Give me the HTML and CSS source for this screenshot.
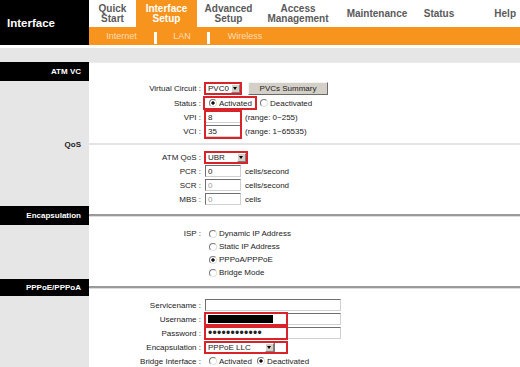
FILE: index.html
```html
<!DOCTYPE html>
<html lang="en">
<head>
    <meta charset="UTF-8">
    <meta name="viewport" content="width=device-width, initial-scale=1.0">
    <title>Interface Setup - Internet</title>
    <link rel="stylesheet" href="styles.css">
</head>
<body>
    <header class="top">
        <div class="brand">Interface</div>
        <div class="menu">
            <nav class="tabs">
                <a class="tab tab-quick">Quick<br>Start</a>
                <a class="tab tab-iface active">Interface<br>Setup</a>
                <a class="tab tab-adv">Advanced<br>Setup</a>
                <a class="tab tab-access">Access<br>Management</a>
                <a class="tab tab-maint">Maintenance</a>
                <a class="tab tab-status">Status</a>
                <a class="tab tab-help">Help</a>
            </nav>
            <nav class="subnav">
                <a class="sub sub-internet">Internet</a>
                <span class="sep"></span>
                <a class="sub sub-lan">LAN</a>
                <span class="sep"></span>
                <a class="sub sub-wireless">Wireless</a>
            </nav>
        </div>
    </header>

    <div class="strip"></div>

    <main class="form">
        <!-- ATM VC -->
        <div class="sec-head">
            <div class="sec-title">ATM VC</div>
            <div class="sec-rule thin"></div>
        </div>
        <div class="row row-tall">
            <span class="label">Virtual Circuit :</span>
            <span class="field">
                <span class="select sel-pvc hl"><span class="val">PVC0</span><span class="arrow"></span></span>
                <span class="btn">PVCs Summary</span>
            </span>
        </div>
        <div class="row">
            <span class="label">Status :</span>
            <span class="field">
                <span class="opt opt-status hl"><span class="radio on"></span>Activated</span>
                <span class="opt"><span class="radio"></span>Deactivated</span>
            </span>
        </div>
        <div class="row">
            <span class="label">VPI :</span>
            <span class="field">
                <span class="input hl hl-pair">8</span>
                <span class="note">(range: 0~255)</span>
            </span>
        </div>
        <div class="row">
            <span class="label">VCI :</span>
            <span class="field">
                <span class="input">35</span>
                <span class="note">(range: 1~65535)</span>
            </span>
        </div>

        <!-- QoS -->
        <div class="sec-head sec-plain">
            <div class="sec-title">QoS</div>
            <div class="sec-rule light"></div>
        </div>
        <div class="row">
            <span class="label">ATM QoS :</span>
            <span class="field">
                <span class="select sel-qos hl"><span class="val">UBR</span><span class="arrow"></span></span>
            </span>
        </div>
        <div class="row">
            <span class="label">PCR :</span>
            <span class="field">
                <span class="input">0</span>
                <span class="note">cells/second</span>
            </span>
        </div>
        <div class="row">
            <span class="label">SCR :</span>
            <span class="field">
                <span class="input off">0</span>
                <span class="note">cells/second</span>
            </span>
        </div>
        <div class="row">
            <span class="label">MBS :</span>
            <span class="field">
                <span class="input off">0</span>
                <span class="note">cells</span>
            </span>
        </div>

        <!-- Encapsulation -->
        <div class="sec-head">
            <div class="sec-title">Encapsulation</div>
            <div class="sec-rule"></div>
        </div>
        <div class="group group-isp">
            <div class="row row-short">
                <span class="label">ISP :</span>
                <span class="field"><span class="opt"><span class="radio"></span>Dynamic IP Address</span></span>
            </div>
            <div class="row row-short">
                <span class="label"></span>
                <span class="field"><span class="opt"><span class="radio"></span>Static IP Address</span></span>
            </div>
            <div class="row row-short">
                <span class="label"></span>
                <span class="field"><span class="opt"><span class="radio on"></span>PPPoA/PPPoE</span></span>
            </div>
            <div class="row row-short">
                <span class="label"></span>
                <span class="field"><span class="opt"><span class="radio"></span>Bridge Mode</span></span>
            </div>
        </div>

        <!-- PPPoE/PPPoA -->
        <div class="sec-head sec-short">
            <div class="sec-title">PPPoE/PPPoA</div>
            <div class="sec-rule"></div>
        </div>
        <div class="group group-ppp">
            <div class="row">
                <span class="label">Servicename :</span>
                <span class="field"><span class="input wide"></span></span>
            </div>
            <div class="row">
                <span class="label">Username :</span>
                <span class="field"><span class="input wide hl hl-long"><span class="redact"></span></span></span>
            </div>
            <div class="row">
                <span class="label">Password :</span>
                <span class="field"><span class="input wide hl hl-long"><span class="dots">••••••••••••</span></span></span>
            </div>
            <div class="row">
                <span class="label">Encapsulation :</span>
                <span class="field">
                    <span class="select sel-encap hl hl-long"><span class="val">PPPoE LLC</span><span class="arrow"></span></span>
                </span>
            </div>
            <div class="row">
                <span class="label">Bridge Interface :</span>
                <span class="field">
                    <span class="opt"><span class="radio"></span>Activated</span>
                    <span class="opt"><span class="radio on"></span>Deactivated</span>
                </span>
            </div>
        </div>
    </main>
</body>
</html>
```

FILE: styles.css
```css
body {
    margin: 0;
    background-color: #fff;
    font-family: "Liberation Sans", Arial, sans-serif;
    color: #222;
    overflow: hidden;
}

/* header */

.top {
    display: flex;
    height: 45px;
}

.brand {
    width: 89px;
    flex-shrink: 0;
    box-sizing: border-box;
    padding-left: 7px;
    display: flex;
    align-items: center;
    background-color: #000;
    color: #fff;
    font-weight: bold;
    font-size: 11.5px;
}

.menu {
    flex: 1;
    display: flex;
    flex-direction: column;
}

.tabs {
    display: flex;
    height: 27px;
}

.tab {
    display: flex;
    align-items: center;
    justify-content: center;
    text-align: center;
    background-color: #fff;
    color: #5a5a5a;
    font-weight: bold;
    font-size: 10px;
    line-height: 10px;
}

.tab.active {
    background-color: #f7941e;
    color: #fff;
}

.tab-quick { width: 47px; }
.tab-iface { width: 61px; }
.tab-adv { width: 63px; }
.tab-access { width: 76px; }
.tab-maint { width: 82px; }
.tab-status { width: 42px; }

.tab-help {
    flex: 1;
    justify-content: flex-end;
    padding-right: 4px;
}

.subnav {
    display: flex;
    height: 18px;
    background-color: #f7941e;
}

.sub {
    display: flex;
    align-items: center;
    justify-content: center;
    font-size: 9px;
    color: #fddcb8;
}

.sub-internet { width: 65px; }
.sub-lan { width: 50px; }
.sub-wireless { width: 70px; }

.sep {
    width: 3px;
    height: 12px;
    margin-top: 5px;
    background-color: #fff;
}

.strip {
    margin-top: 3px;
    height: 14px;
    background-color: #e6e6e6;
}

/* form */

.form {
    background: linear-gradient(to right, #e6e6e6 89px, #fff 89px);
    font-size: 8px;
}

.sec-head {
    display: flex;
    align-items: center;
    height: 19px;
}

.sec-short {
    height: 17px;
}

.sec-plain {
    height: 12px;
}

.sec-title {
    width: 89px;
    height: 100%;
    box-sizing: border-box;
    padding-right: 8px;
    display: flex;
    align-items: center;
    justify-content: flex-end;
    background-color: #000;
    color: #fff;
    font-weight: bold;
    font-size: 8px;
}

.sec-plain .sec-title {
    background: none;
    color: #222;
}

.sec-rule {
    flex: 1;
    height: 2px;
    background-color: #9a9a9a;
    border-bottom: 1px solid #ddd;
}

.sec-rule.light {
    background-color: #e4e4e4;
    border-bottom: none;
}

.sec-rule.thin {
    align-self: flex-start;
    height: 1px;
    background-color: #ececec;
    border-bottom: none;
}

.row {
    display: flex;
    align-items: center;
    height: 14px;
    padding-left: 89px;
}

.row-tall {
    height: 15px;
}

.row-short {
    height: 13px;
}

.group {
    padding-top: 2px;
}

.label {
    width: 116px;
    box-sizing: border-box;
    padding-right: 4px;
    text-align: right;
    white-space: nowrap;
}

.field {
    display: flex;
    align-items: center;
    gap: 3px;
    white-space: nowrap;
}

.note {
    padding-left: 1px;
}

/* controls */

.input {
    display: inline-flex;
    align-items: center;
    width: 36px;
    height: 12px;
    box-sizing: border-box;
    padding-left: 2px;
    border: 1px solid;
    border-color: #6f6f6f #d0d0d0 #d0d0d0 #6f6f6f;
    background-color: #fff;
}

.input.wide {
    width: 136px;
}

.input.off {
    color: #9a9a9a;
}

.redact {
    width: 65px;
    height: 8px;
    background-color: #000;
}

.dots {
    font-size: 12px;
    line-height: 10px;
    letter-spacing: 0.3px;
}

.select {
    display: inline-flex;
    align-items: center;
    height: 11px;
    box-sizing: border-box;
    border: 1px solid #7a7a7a;
    background-color: #fff;
}

.sel-pvc { width: 36px; }
.sel-qos { width: 42px; }
.sel-encap { width: 70px; }

.val {
    flex: 1;
    padding-left: 2px;
    line-height: 9px;
}

.arrow {
    position: relative;
    width: 9px;
    height: 9px;
    box-sizing: border-box;
    background-color: #d4d0c8;
    border: 1px solid;
    border-color: #fff #808080 #808080 #fff;
}

.arrow::after {
    content: "";
    position: absolute;
    left: 1px;
    top: 2px;
    border-left: 2.5px solid transparent;
    border-right: 2.5px solid transparent;
    border-top: 3px solid #000;
}

.btn {
    display: inline-flex;
    align-items: center;
    justify-content: center;
    width: 80px;
    height: 13px;
    margin-left: 4px;
    box-sizing: border-box;
    background-color: #d4d0c8;
    border: 1px solid;
    border-color: #f4f4f4 #6a6a6a #6a6a6a #f4f4f4;
}

.opt {
    display: inline-flex;
    align-items: center;
    gap: 2px;
    padding-left: 4px;
    height: 10px;
}

.opt + .opt {
    padding-left: 2px;
}

.opt-status {
    width: 46px;
}

.radio {
    width: 6px;
    height: 6px;
    border-radius: 50%;
    border: 1px solid;
    border-color: #7a7a7a #e0e0e0 #e0e0e0 #7a7a7a;
    background-color: #fff;
}

.radio.on {
    background: radial-gradient(circle, #111 0 1.4px, #fff 1.9px);
}

/* red annotation boxes drawn over the controls */

.hl {
    position: relative;
}

.hl::after {
    content: "";
    position: absolute;
    top: -2px;
    right: -2px;
    bottom: -2px;
    left: -2px;
    border: 2px solid #d8232a;
}

.hl-pair::after {
    bottom: auto;
    height: 29px;
    box-sizing: border-box;
}

.hl-long::after {
    right: auto;
    width: 84px;
    box-sizing: border-box;
}
```
